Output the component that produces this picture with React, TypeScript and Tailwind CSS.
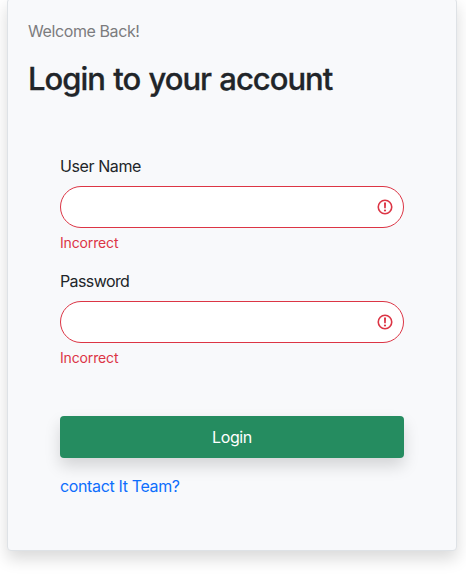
const fields = [
  { id: "username", label: "User Name", type: "text", tracking: "tracking-[-0.4px]" },
  { id: "password", label: "Password", type: "password", tracking: "tracking-[-0.6px]" },
];

function AlertIcon() {
  return (
    <svg viewBox="0 0 18 18" className="pointer-events-none absolute right-[10px] top-[12px] size-[18px]" fill="none" stroke="#dc3545">
      <circle cx="9" cy="9" r="6.75" strokeWidth="1.6" />
      <path fill="#dc3545" stroke="none" d="M8 4.6h2l-.2 5.6H8.2z" />
      <circle cx="9" cy="12.5" r="1.1" fill="#dc3545" stroke="none" />
    </svg>
  );
}

export default function App() {
  return (
    <div className="h-[578px] overflow-hidden bg-white font-['Inter',sans-serif] text-base text-[#212529]">
      <main className="-mt-0.5 ml-[7px] h-[553px] w-[450px] rounded border border-[#dee2e6] bg-[#f8f9fb] px-5 pt-5 shadow-[0_8px_16px_rgba(0,0,0,0.15)]">
        <p className="leading-6 tracking-[-0.4px] text-[#7c7c7e]">Welcome Back!</p>
        <h1 className="mt-[17px] whitespace-nowrap text-[31px] font-medium leading-[38px] tracking-[-1px] [-webkit-text-stroke:0.3px_#212529] [word-spacing:1px]">Login to your account</h1>
        <form className="px-8 pt-[56px]" onSubmit={(e) => e.preventDefault()}>
          {fields.map((f) => (
            <div key={f.id} className="h-[115px]">
              <label htmlFor={f.id} className={`block leading-6 ${f.tracking}`}>{f.label}</label>
              <div className="relative mt-2">
                <input id={f.id} type={f.type} className="block h-[42px] w-full rounded-full border border-[#dc3545] bg-white px-4 pr-10 outline-none" />
                <AlertIcon />
              </div>
              <p className="mt-1 text-sm leading-[21px] tracking-[-0.15px] text-[#dc3545]">Incorrect</p>
            </div>
          ))}
          <button className="mt-8 block h-[42px] w-full rounded bg-[#258c60] tracking-[-0.4px] text-white shadow-[0_8px_16px_rgba(0,0,0,0.15)]">Login</button>
          <a href="#" className="mt-4 block leading-6 tracking-[-0.36px] text-[#0d6efd]">contact It Team?</a>
        </form>
      </main>
    </div>
  );
}
